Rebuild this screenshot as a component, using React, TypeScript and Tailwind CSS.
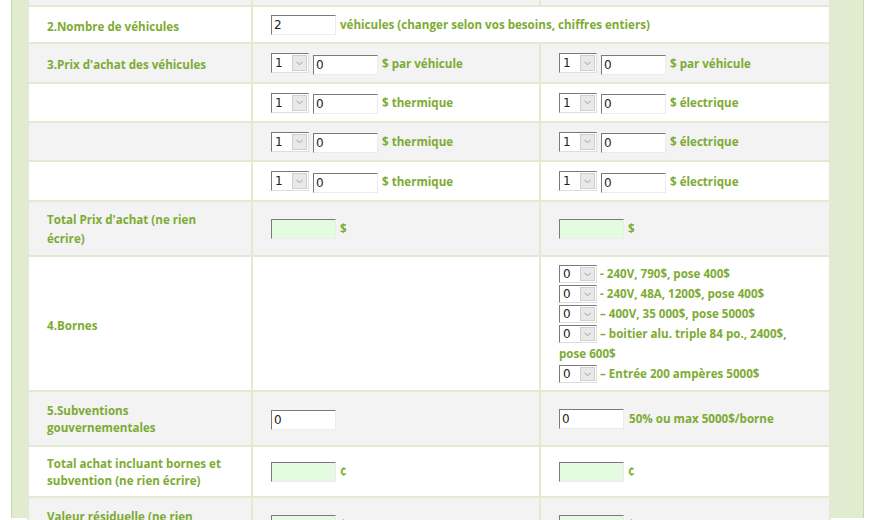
import React from 'react'

const label = "text-[11.6px] font-bold leading-[17px] text-[#7eab34]"

function Field({ value = '', green = false }: { value?: string; green?: boolean }) {
  return (
    <input
      readOnly
      value={value}
      className={`h-[20px] w-[65px] border border-t-[#7a7a7a] border-l-[#7a7a7a] border-r-[#ececec] border-b-[#ececec] ${
        green ? 'bg-[#e4fbe2]' : 'bg-white'
      } px-[2px] align-middle text-[12px] leading-[18px] text-[#222] outline-none [font-family:'DejaVu_Sans',sans-serif]`}
    />
  )
}

function Pick({ value, small = false }: { value: string; small?: boolean }) {
  return (
    <span
      className={`inline-flex ${small ? 'h-[18px]' : 'h-[20px]'} w-[38px] items-stretch border border-t-[#7a7a7a] border-l-[#7a7a7a] border-r-[#dedede] border-b-[#dedede] bg-white align-middle`}
    >
      <span className="flex flex-1 items-center pl-[3px] text-[12px] font-normal text-[#222] [font-family:'DejaVu_Sans',sans-serif]">
        {value}
      </span>
      <span className="my-[1px] mr-[1px] flex w-[15px] items-center justify-center border border-[#cfcfcf] bg-[#e9e9e9]">
        <svg width="7" height="5" viewBox="0 0 7 5" fill="none">
          <path d="M0.5 0.8 L3.5 3.8 L6.5 0.8" stroke="#9a9a9a" strokeWidth="1" />
        </svg>
      </span>
    </span>
  )
}

function PriceCell({ note }: { note: string }) {
  return (
    <div className="flex items-center">
      <Pick value="1" />
      <span className="ml-[4px]"><Field value="0" /></span>
      <span className={`ml-[4px] ${label}`}>{note}</span>
    </div>
  )
}

function TotalCell({ unit }: { unit: string }) {
  return (
    <div className="flex items-center">
      <Field green />
      <span className={`ml-[4px] ${label}`}>{unit}</span>
    </div>
  )
}

const bornes = [
  '- 240V, 790$, pose 400$',
  '- 240V, 48A, 1200$, pose 400$',
  '– 400V, 35 000$, pose 5000$',
  '– boitier alu. triple 84 po., 2400$, pose 600$',
  '– Entrée 200 ampères 5000$',
]

export default function App() {
  const td = "border-2 border-[#e2ead2] align-middle"
  const c1 = `${td} pl-[18px] pr-[19px]`
  const c2 = `${td} pl-[18px] pr-[18px]`
  return (
    <div className="h-[520px] w-[880px] overflow-hidden bg-white pl-[11px] [font-family:'Open_Sans',sans-serif]">
      <div className="h-full w-[853px] border-x border-x-[#cbd9ad] bg-[#e1ebcf] pl-[15px] pr-[35px]">
        <table className="-mt-[2px] w-[802px] table-fixed border-collapse bg-white">
          <colgroup>
            <col className="w-[224px]" />
            <col className="w-[288px]" />
            <col className="w-[290px]" />
          </colgroup>
          <tbody>
            <tr className="h-[7px] bg-[#f3f3f3]">
              <td className={td}></td>
              <td className={td}></td>
              <td className={td}></td>
            </tr>
            <tr className="h-[37px]">
              <td className={c1}><span className={label}>2.Nombre de véhicules</span></td>
              <td className={c2} colSpan={2}>
                <div className="flex items-center">
                  <Field value="2" />
                  <span className={`ml-[4px] ${label}`}>véhicules (changer selon vos besoins, chiffres entiers)</span>
                </div>
              </td>
            </tr>
            <tr className="h-[40px] bg-[#f3f3f3]">
              <td className={c1}><span className={label}>3.Prix d'achat des véhicules</span></td>
              <td className={c2}><PriceCell note="$ par véhicule" /></td>
              <td className={c2}><PriceCell note="$ par véhicule" /></td>
            </tr>
            <tr className="h-[39px]">
              <td className={c1}></td>
              <td className={c2}><PriceCell note="$ thermique" /></td>
              <td className={c2}><PriceCell note="$ électrique" /></td>
            </tr>
            <tr className="h-[39px] bg-[#f3f3f3]">
              <td className={c1}></td>
              <td className={c2}><PriceCell note="$ thermique" /></td>
              <td className={c2}><PriceCell note="$ électrique" /></td>
            </tr>
            <tr className="h-[40px]">
              <td className={c1}></td>
              <td className={c2}><PriceCell note="$ thermique" /></td>
              <td className={c2}><PriceCell note="$ électrique" /></td>
            </tr>
            <tr className="h-[55px] bg-[#f3f3f3]">
              <td className={c1}><div className={`${label} leading-[19px]`}>Total Prix d'achat (ne rien écrire)</div></td>
              <td className={c2}><TotalCell unit="$" /></td>
              <td className={c2}><TotalCell unit="$" /></td>
            </tr>
            <tr className="h-[135px]">
              <td className={c1}><span className={label}>4.Bornes</span></td>
              <td className={c2}></td>
              <td className={`${c2} py-[5px]`}>
                <div className={`${label} leading-[20px]`}>
                  {bornes.map((b) => (
                    <div key={b}>
                      <Pick value="0" small /> {b}
                    </div>
                  ))}
                </div>
              </td>
            </tr>
            <tr className="h-[55px] bg-[#f3f3f3]">
              <td className={c1}><div className={label}>5.Subventions gouvernementales</div></td>
              <td className={c2}><Field value="0" /></td>
              <td className={c2}>
                <div className="flex items-center">
                  <Field value="0" />
                  <span className={`ml-[5px] ${label}`}>50% ou max 5000$/borne</span>
                </div>
              </td>
            </tr>
            <tr className="h-[51px]">
              <td className={c1}><div className={`${label} leading-[16px]`}>Total achat incluant bornes et subvention (ne rien écrire)</div></td>
              <td className={c2}><TotalCell unit="¢" /></td>
              <td className={c2}><TotalCell unit="¢" /></td>
            </tr>
            <tr className="h-[55px] bg-[#f3f3f3]">
              <td className={c1}><div className={label}>Valeur résiduelle (ne rien écrire)</div></td>
              <td className={c2}><TotalCell unit="$" /></td>
              <td className={c2}><TotalCell unit="$" /></td>
            </tr>
          </tbody>
        </table>
      </div>
    </div>
  )
}
